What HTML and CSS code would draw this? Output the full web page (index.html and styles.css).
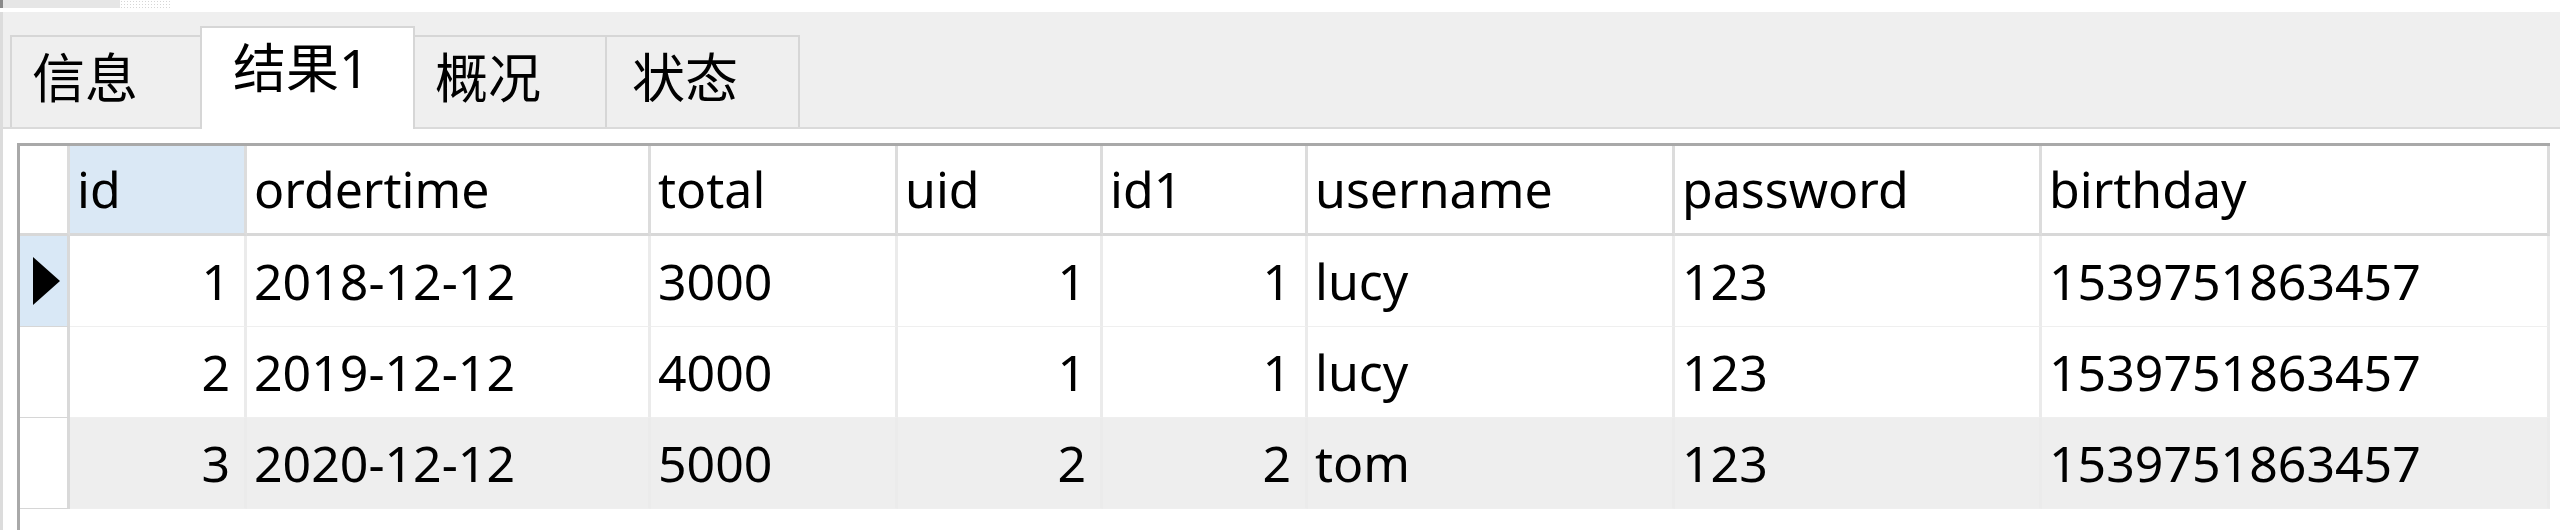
FILE: index.html
```html
<!DOCTYPE html>
<html lang="zh-CN">
<head>
<meta charset="utf-8">
<title>结果1</title>
<link rel="stylesheet" href="styles.css">
</head>
<body>
<div class="topbar">
  <div class="hscroll"><span class="hs-end"></span><span class="hs-track"></span><span class="hs-dots"></span></div>
</div>
<div class="panel">
  <div class="tabs">
    <div class="tab">信息</div>
    <div class="tab active">结果1</div>
    <div class="tab">概况</div>
    <div class="tab">状态</div>
  </div>
  <div class="content">
    <div class="grid">
      <div class="row head">
        <div class="cell rh"></div>
        <div class="cell sel">id</div>
        <div class="cell">ordertime</div>
        <div class="cell">total</div>
        <div class="cell">uid</div>
        <div class="cell">id1</div>
        <div class="cell">username</div>
        <div class="cell">password</div>
        <div class="cell">birthday</div>
      </div>
      <div class="row">
        <div class="cell rh current"><span class="arrow"></span></div>
        <div class="cell num">1</div>
        <div class="cell">2018-12-12</div>
        <div class="cell">3000</div>
        <div class="cell num">1</div>
        <div class="cell num">1</div>
        <div class="cell">lucy</div>
        <div class="cell">123</div>
        <div class="cell">1539751863457</div>
      </div>
      <div class="row">
        <div class="cell rh"></div>
        <div class="cell num">2</div>
        <div class="cell">2019-12-12</div>
        <div class="cell">4000</div>
        <div class="cell num">1</div>
        <div class="cell num">1</div>
        <div class="cell">lucy</div>
        <div class="cell">123</div>
        <div class="cell">1539751863457</div>
      </div>
      <div class="row alt">
        <div class="cell rh"></div>
        <div class="cell num">3</div>
        <div class="cell">2020-12-12</div>
        <div class="cell">5000</div>
        <div class="cell num">2</div>
        <div class="cell num">2</div>
        <div class="cell">tom</div>
        <div class="cell">123</div>
        <div class="cell">1539751863457</div>
      </div>
    </div>
  </div>
</div>
</body>
</html>
```
FILE: styles.css
```css
* { box-sizing: border-box; }
html, body {
  margin: 0;
  padding: 0;
  background: #ffffff;
}
body {
  width: 2560px;
  height: 530px;
  overflow: hidden;
  font-family: "Noto Sans", "Noto Sans CJK SC", sans-serif;
  color: #000;
}

/* top scrollbar remnant */
.topbar {
  height: 12px;
  background: #fff;
}
.hscroll {
  display: flex;
  height: 8px;
}
.hs-end { width: 3px; background: #8a8a8a; }
.hs-track { width: 117px; background: #e6e6e6; }
.hs-dots {
  width: 50px;
  background-image: radial-gradient(circle, #d6d6d6 0.8px, transparent 1px);
  background-size: 3px 3px;
}

/* panel */
.panel {
  height: 518px;
  border-left: 3px solid #dcdcdc;
  display: flex;
  flex-direction: column;
}

/* tab strip */
.tabs {
  height: 117px;
  flex: none;
  background: #efefef;
  border-bottom: 2px solid #dadada;
  display: flex;
  align-items: flex-end;
  padding-left: 7px;
}
.tab {
  position: relative;
  height: 92px;
  margin-bottom: 0;
  border: 2px solid #d6d6d6;
  border-bottom: none;
  background: #efefef;
  font-size: 53px;
  line-height: 60px;
  padding: 11px 0 0 20px;
  white-space: nowrap;
}
.tab + .tab { margin-left: -2px; }
.tab:nth-child(1) { width: 192px; }
.tab:nth-child(2) { width: 215px; }
.tab:nth-child(3) { width: 194px; }
.tab:nth-child(4) { width: 195px; padding-left: 25px; }
.tab.active {
  z-index: 1;
  height: 103px;
  margin-bottom: -2px;
  background: #fff;
  padding: 10px 0 0 31px;
}

/* content */
.content {
  flex: 1;
  background: #fff;
  padding: 14px 0 0 14px;
}
.grid {
  height: 100%;
  width: 2533px;
  border-top: 3px solid #a9a9a9;
  border-left: 3px solid #a9a9a9;
}
.row {
  display: grid;
  grid-template-columns: 50px 177px 404px 247px 205px 205px 367px 367px 508px;
  font-size: 50px;
}
.cell {
  border-right: 3px solid #ebebeb;
  border-bottom: 1px solid #efefef;
  height: 91px;
  line-height: 90px;
  padding: 0 0 0 7px;
  white-space: nowrap;
  overflow: hidden;
}
.cell.num {
  text-align: right;
  padding: 0 14px 0 0;
}
.row.head .cell {
  height: 90px;
  line-height: 87px;
  border-right-color: #dcdcdc;
  border-bottom: 3px solid #d8d8d8;
}
.row.head .cell.sel { background: #dae8f5; }
.cell.rh {
  border-right-color: #d9d9d9;
  border-bottom: 1px solid #d6d6d6;
  padding: 0 0 0 13px;
  display: flex;
  align-items: center;
}
.cell.rh.current { background: #d9e8f6; }
.arrow {
  width: 0;
  height: 0;
  border-left: 27px solid #000;
  border-top: 24px solid transparent;
  border-bottom: 24px solid transparent;
}
.row.alt .cell { background: #eeeeee; }
.row.alt .cell.rh { background: #fff; border-bottom-color: #d6d6d6; }
```
